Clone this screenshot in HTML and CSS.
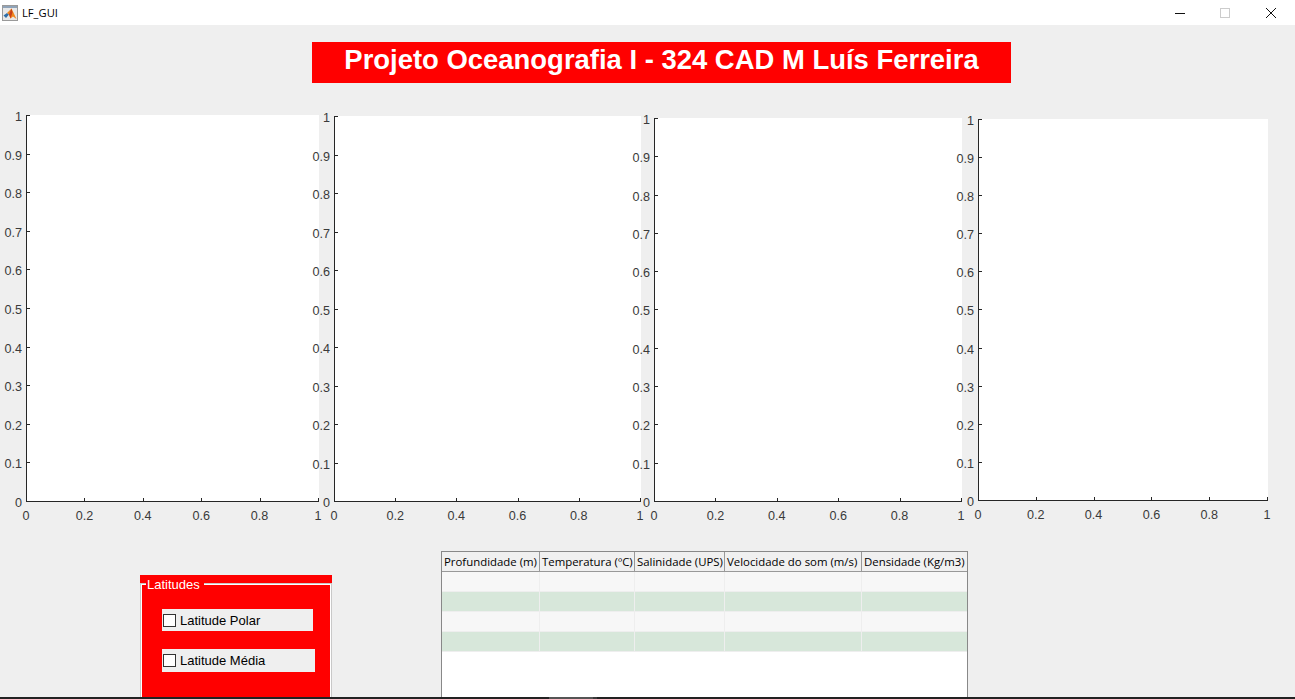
FILE: index.html
```html
<!DOCTYPE html>
<html>
<head>
    <title>LF_GUI</title>
    <link rel="stylesheet" href="styles.css">
</head>
<body>
    <div class="titlebar">
        <svg class="app-icon" width="16" height="16" viewBox="0 0 16 16">
            <rect x="0.5" y="0.5" width="15" height="15" fill="#e8e8e8" stroke="#9a9a9a"/>
            <rect x="1" y="1" width="14" height="2" fill="#8fa3b8"/>
            <path d="M1.5 10.5 L5 8 L7 9.5 L4 13 Z" fill="#2f6fa8"/>
            <path d="M5 8 L9.5 3.5 L14.5 14 L11 11.5 L8.5 13.5 L7 9.5 Z" fill="#f0861e"/>
            <path d="M9.5 3.5 L10.5 7.5 L8.5 13.5 L7 9.5 Z" fill="#c8401a"/>
        </svg>
        <span class="app-name">LF_GUI</span>
        <div class="win-btns">
            <svg width="12" height="12" viewBox="0 0 12 12"><path d="M2 6.5 H12" stroke="#111" fill="none"/></svg>
            <svg width="12" height="12" viewBox="0 0 12 12"><rect x="1.5" y="1.5" width="9" height="9" stroke="#ccc" fill="none"/></svg>
            <svg width="12" height="12" viewBox="0 0 12 12"><path d="M1 1 L11 11 M11 1 L1 11" stroke="#111" fill="none"/></svg>
        </div>
    </div>

    <div class="figure">
        <h1 class="banner">Projeto Oceanografia I - 324 CAD M Luís Ferreira</h1>

        <div class="plots">
            <div class="plot plot1">
                <div class="yaxis">
                    <div class="ytick"><span>1</span></div>
                    <div class="ytick"><span>0.9</span></div>
                    <div class="ytick"><span>0.8</span></div>
                    <div class="ytick"><span>0.7</span></div>
                    <div class="ytick"><span>0.6</span></div>
                    <div class="ytick"><span>0.5</span></div>
                    <div class="ytick"><span>0.4</span></div>
                    <div class="ytick"><span>0.3</span></div>
                    <div class="ytick"><span>0.2</span></div>
                    <div class="ytick"><span>0.1</span></div>
                    <div class="ytick"><span>0</span></div>
                </div>
                <div class="xaxis">
                    <div class="xtick"><span>0</span></div>
                    <div class="xtick"><span>0.2</span></div>
                    <div class="xtick"><span>0.4</span></div>
                    <div class="xtick"><span>0.6</span></div>
                    <div class="xtick"><span>0.8</span></div>
                    <div class="xtick"><span>1</span></div>
                </div>
            </div>
            <div class="plot plot2">
                <div class="yaxis">
                    <div class="ytick"><span>1</span></div>
                    <div class="ytick"><span>0.9</span></div>
                    <div class="ytick"><span>0.8</span></div>
                    <div class="ytick"><span>0.7</span></div>
                    <div class="ytick"><span>0.6</span></div>
                    <div class="ytick"><span>0.5</span></div>
                    <div class="ytick"><span>0.4</span></div>
                    <div class="ytick"><span>0.3</span></div>
                    <div class="ytick"><span>0.2</span></div>
                    <div class="ytick"><span>0.1</span></div>
                    <div class="ytick"><span>0</span></div>
                </div>
                <div class="xaxis">
                    <div class="xtick"><span>0</span></div>
                    <div class="xtick"><span>0.2</span></div>
                    <div class="xtick"><span>0.4</span></div>
                    <div class="xtick"><span>0.6</span></div>
                    <div class="xtick"><span>0.8</span></div>
                    <div class="xtick"><span>1</span></div>
                </div>
            </div>
            <div class="plot plot3">
                <div class="yaxis">
                    <div class="ytick"><span>1</span></div>
                    <div class="ytick"><span>0.9</span></div>
                    <div class="ytick"><span>0.8</span></div>
                    <div class="ytick"><span>0.7</span></div>
                    <div class="ytick"><span>0.6</span></div>
                    <div class="ytick"><span>0.5</span></div>
                    <div class="ytick"><span>0.4</span></div>
                    <div class="ytick"><span>0.3</span></div>
                    <div class="ytick"><span>0.2</span></div>
                    <div class="ytick"><span>0.1</span></div>
                    <div class="ytick"><span>0</span></div>
                </div>
                <div class="xaxis">
                    <div class="xtick"><span>0</span></div>
                    <div class="xtick"><span>0.2</span></div>
                    <div class="xtick"><span>0.4</span></div>
                    <div class="xtick"><span>0.6</span></div>
                    <div class="xtick"><span>0.8</span></div>
                    <div class="xtick"><span>1</span></div>
                </div>
            </div>
            <div class="plot plot4">
                <div class="yaxis">
                    <div class="ytick"><span>1</span></div>
                    <div class="ytick"><span>0.9</span></div>
                    <div class="ytick"><span>0.8</span></div>
                    <div class="ytick"><span>0.7</span></div>
                    <div class="ytick"><span>0.6</span></div>
                    <div class="ytick"><span>0.5</span></div>
                    <div class="ytick"><span>0.4</span></div>
                    <div class="ytick"><span>0.3</span></div>
                    <div class="ytick"><span>0.2</span></div>
                    <div class="ytick"><span>0.1</span></div>
                    <div class="ytick"><span>0</span></div>
                </div>
                <div class="xaxis">
                    <div class="xtick"><span>0</span></div>
                    <div class="xtick"><span>0.2</span></div>
                    <div class="xtick"><span>0.4</span></div>
                    <div class="xtick"><span>0.6</span></div>
                    <div class="xtick"><span>0.8</span></div>
                    <div class="xtick"><span>1</span></div>
                </div>
            </div>
        </div>

        <div class="controls">
            <div class="panel">
                <div class="panel-strip"></div>
                <span class="panel-title">Latitudes</span>
                <div class="panel-body">
                    <label class="check check-polar"><span class="box"></span>Latitude Polar</label>
                    <label class="check check-media"><span class="box"></span>Latitude Média</label>
                </div>
            </div>

            <div class="data-wrap">
                <table class="data">
                    <thead>
                        <tr>
                            <th class="col1">Profundidade (m)</th>
                            <th class="col2">Temperatura (ºC)</th>
                            <th class="col3">Salinidade (UPS)</th>
                            <th class="col4">Velocidade do som (m/s)</th>
                            <th class="col5">Densidade (Kg/m3)</th>
                        </tr>
                    </thead>
                    <tbody>
                        <tr><td></td><td></td><td></td><td></td><td></td></tr>
                        <tr><td></td><td></td><td></td><td></td><td></td></tr>
                        <tr><td></td><td></td><td></td><td></td><td></td></tr>
                        <tr><td></td><td></td><td></td><td></td><td></td></tr>
                    </tbody>
                </table>
            </div>
        </div>
    </div>

    <div class="taskbar">
        <div class="task-light"></div>
        <div class="task-gap"></div>
    </div>
</body>
</html>
```

FILE: styles.css
```css
html, body {
    margin: 0;
    height: 100%;
}

body {
    display: flex;
    flex-direction: column;
    height: 699px;
    overflow: hidden;
    background-color: #efefef;
    font-family: "Liberation Sans", Arial, sans-serif;
}

.titlebar {
    display: flex;
    align-items: center;
    height: 25px;
    flex-shrink: 0;
    background-color: #fff;
}

.app-icon {
    margin-left: 2px;
}

.app-name {
    margin-left: 4px;
    font-family: "Open Sans", sans-serif;
    font-size: 11.2px;
    color: #000;
}

.win-btns {
    display: flex;
    gap: 34px;
    margin-left: auto;
    margin-right: 18px;
}

.figure {
    flex: 1;
    min-height: 0;
    overflow: hidden;
    padding-top: 17px;
}

.banner {
    margin: 0 0 0 312px;
    width: 699px;
    height: 41px;
    line-height: 36px;
    background-color: #f00;
    color: #fff;
    font-size: 27.45px;
    font-weight: bold;
    text-align: center;
}

.plots {
    display: flex;
    align-items: flex-start;
    height: 468px;
    padding-left: 26px;
}

.plot {
    position: relative;
    box-sizing: border-box;
    background-color: #fff;
    border-left: 1px solid #262626;
    border-bottom: 1px solid #262626;
}

.plot1 {
    width: 293px;
    height: 387px;
    margin-top: 32px;
}

.plot2 {
    width: 307px;
    height: 386px;
    margin-top: 33px;
    margin-left: 15px;
}

.plot3 {
    width: 308px;
    height: 384px;
    margin-top: 35px;
    margin-left: 13px;
}

.plot4 {
    width: 290px;
    height: 382px;
    margin-top: 36px;
    margin-left: 16px;
}

.yaxis {
    position: absolute;
    left: -1px;
    top: 0;
    bottom: -1px;
    display: flex;
    flex-direction: column;
    justify-content: space-between;
}

.ytick {
    position: relative;
    width: 4px;
    height: 1px;
    background-color: #262626;
}

.ytick span {
    position: absolute;
    right: 8px;
    top: -5px;
    font-size: 12.6px;
    line-height: 14px;
    color: #3a3a3a;
}

.xaxis {
    position: absolute;
    left: -1px;
    right: 0;
    bottom: -1px;
    display: flex;
    justify-content: space-between;
    align-items: flex-end;
}

.xtick {
    position: relative;
    width: 1px;
    height: 4px;
    background-color: #262626;
}

.xtick span {
    position: absolute;
    top: 11px;
    left: 0;
    transform: translateX(-50%);
    font-size: 12.6px;
    line-height: 14px;
    color: #3a3a3a;
}

.controls {
    display: flex;
    align-items: flex-start;
    padding-left: 140px;
}

.panel {
    position: relative;
    width: 192px;
    margin-top: 24px;
}

.panel-strip {
    height: 9px;
    background-color: #f00;
}

.panel-title {
    position: absolute;
    left: 6px;
    top: 0;
    padding: 2px 4px 0 1px;
    height: 16px;
    background-color: #f00;
    color: #fff;
    font-size: 13px;
    line-height: 16px;
}

.panel-body {
    box-sizing: border-box;
    display: flex;
    flex-direction: column;
    align-items: flex-start;
    width: 190px;
    height: 130px;
    margin-left: 1px;
    padding: 24px 0 0 20px;
    background-color: #f00;
    border: 1px solid #fff;
    border-bottom: 0;
    box-shadow: 0 0 0 1px #c8c8c8;
}

.check {
    display: flex;
    align-items: center;
    background-color: #efefef;
    color: #000;
    font-size: 13px;
}

.check-polar {
    width: 151px;
    height: 22px;
}

.check-media {
    width: 153px;
    height: 23px;
    margin-top: 18px;
}

.box {
    box-sizing: border-box;
    width: 13px;
    height: 13px;
    margin: 0 4px 0 1px;
    background-color: #fff;
    border: 1px solid #333;
}

.data-wrap {
    box-sizing: border-box;
    width: 527px;
    height: 160px;
    margin-left: 109px;
    background-color: #fff;
    border: 1px solid #888;
}

.data {
    width: 525px;
    border-collapse: separate;
    border-spacing: 0;
    table-layout: fixed;
    font-family: "Open Sans", sans-serif;
}

.data th {
    box-sizing: border-box;
    height: 20px;
    padding: 0 0 0 2px;
    border-right: 1px solid #999;
    border-bottom: 1px solid #999;
    background-color: #f0f0f0;
    font-size: 11.4px;
    font-weight: normal;
    text-align: left;
    white-space: nowrap;
    overflow: hidden;
    color: #000;
}

.data th:last-child {
    border-right: 0;
}

.col1 { width: 98px; }
.col2 { width: 95px; }
.col3 { width: 90px; }
.col4 { width: 137px; }
.col5 { width: 105px; }

.data td {
    box-sizing: border-box;
    height: 20px;
    padding: 0;
    border-right: 1px solid #eee;
    border-bottom: 1px solid #eee;
    background-color: #f7f7f7;
}

.data td:last-child {
    border-right: 0;
}

.data tr:nth-child(even) td {
    background-color: #d7e7da;
}

.taskbar {
    display: flex;
    height: 2px;
    flex-shrink: 0;
    padding-left: 549px;
    background-color: #222;
}

.task-light {
    width: 44px;
    background-color: #555;
}

.task-gap {
    width: 4px;
    background-color: #3a3a3a;
}
```
